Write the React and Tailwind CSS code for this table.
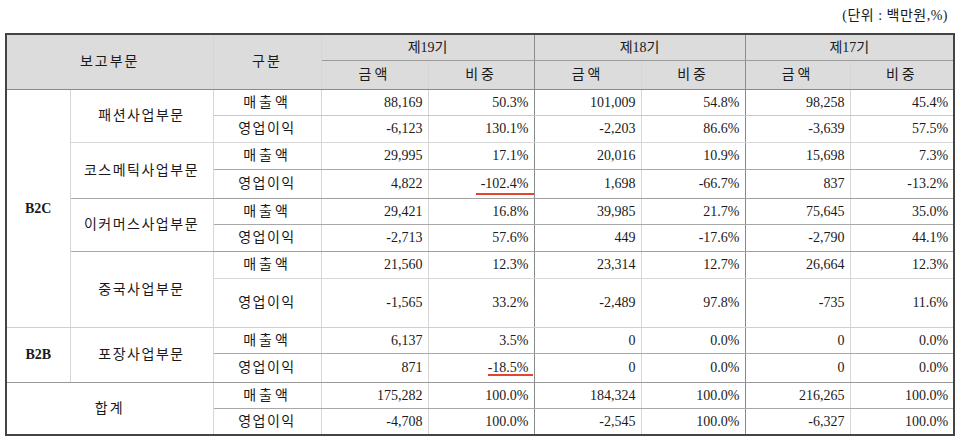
import React from 'react';

const rows = [
  { seg: 'B2C', segSpan: 8, unit: '패션사업부문', unitSpan: 2, kind: '매출액', h: 'h-[26px]', line: 'border-b-[#c8c8c8]', vals: ['88,169', '50.3%', '101,009', '54.8%', '98,258', '45.4%'] },
  { kind: '영업이익', h: 'h-[27px]', line: 'border-b-[#d8d8d8]', vals: ['-6,123', '130.1%', '-2,203', '86.6%', '-3,639', '57.5%'] },
  { unit: '코스메틱사업부문', unitSpan: 2, kind: '매출액', h: 'h-[27px]', line: 'border-b-[#a8a8a8]', vals: ['29,995', '17.1%', '20,016', '10.9%', '15,698', '7.3%'] },
  { kind: '영업이익', h: 'h-[29px]', line: 'border-b-[#a0a0a0]', mark: 'a', vals: ['4,822', '-102.4%', '1,698', '-66.7%', '837', '-13.2%'] },
  { unit: '이커머스사업부문', unitSpan: 2, kind: '매출액', h: 'h-[26px]', line: 'border-b-[#a8a8a8]', vals: ['29,421', '16.8%', '39,985', '21.7%', '75,645', '35.0%'] },
  { kind: '영업이익', h: 'h-[27px]', line: 'border-b-[#a0a0a0]', vals: ['-2,713', '57.6%', '449', '-17.6%', '-2,790', '44.1%'] },
  { unit: '중국사업부문', unitSpan: 2, kind: '매출액', h: 'h-[27px]', line: 'border-b-[#d8d8d8]', vals: ['21,560', '12.3%', '23,314', '12.7%', '26,664', '12.3%'] },
  { kind: '영업이익', h: 'h-[49px]', line: 'border-b-[#d0d0d0]', vals: ['-1,565', '33.2%', '-2,489', '97.8%', '-735', '11.6%'] },
  { seg: 'B2B', segSpan: 2, unit: '포장사업부문', unitSpan: 2, kind: '매출액', h: 'h-[26px]', line: 'border-b-[#a8a8a8]', vals: ['6,137', '3.5%', '0', '0.0%', '0', '0.0%'] },
  { kind: '영업이익', h: 'h-[29px]', line: 'border-b-[#999999]', mark: 'b', vals: ['871', '-18.5%', '0', '0.0%', '0', '0.0%'] },
  { total: true, kind: '매출액', h: 'h-[26px]', line: 'border-b-[#a8a8a8]', vals: ['175,282', '100.0%', '184,324', '100.0%', '216,265', '100.0%'] },
  { kind: '영업이익', h: 'h-[27px]', line: 'border-b-[#444444]', vals: ['-4,708', '100.0%', '-2,545', '100.0%', '-6,327', '100.0%'] },
];

const groupLine = ['border-r-[#d6d6d6]', 'border-r-[#8a8a8a]', 'border-r-[#d6d6d6]', 'border-r-[#8a8a8a]', 'border-r-[#d6d6d6]', 'border-r-[#444444]'];

export default function App() {
  return (
    <div className="w-[960px] h-[444px] bg-white text-[#1a1a1a] text-[14px]" style={{ fontFamily: '"Liberation Serif", "Noto Sans CJK KR", serif' }}>
      <div className="h-[33px] pt-[6px] pr-[12px] text-right leading-[20px] tracking-[0.5px]">(단위 : 백만원,%)</div>
      <table className="ml-[5px] table-fixed border-collapse w-[948px]">
        <colgroup>
          <col className="w-[64px]" />
          <col className="w-[143px]" />
          <col className="w-[108px]" />
          <col className="w-[107px]" />
          <col className="w-[106px]" />
          <col className="w-[107px]" />
          <col className="w-[104px]" />
          <col className="w-[105px]" />
          <col className="w-[104px]" />
        </colgroup>
        <thead>
          <tr className="h-[26px] bg-[#dcdcdc]">
            <th colSpan={2} rowSpan={2} className="font-normal tracking-[2px] border-2 border-[#444444] border-r border-r-[#d6d6d6] border-b border-b-[#8a8a8a]">보고부문</th>
            <th rowSpan={2} className="font-normal tracking-[2px] border-t-2 border-t-[#444444] border-r border-r-[#d6d6d6] border-b border-b-[#8a8a8a]">구분</th>
            <th colSpan={2} className="font-normal border-t-2 border-t-[#444444] border-r border-r-[#8a8a8a] border-b border-b-[#9a9a9a]">제19기</th>
            <th colSpan={2} className="font-normal border-t-2 border-t-[#444444] border-r border-r-[#8a8a8a] border-b border-b-[#9a9a9a]">제18기</th>
            <th colSpan={2} className="font-normal border-t-2 border-t-[#444444] border-r-2 border-r-[#444444] border-b border-b-[#9a9a9a]">제17기</th>
          </tr>
          <tr className="h-[29px] bg-[#dcdcdc]">
            {['금액', '비중', '금액', '비중', '금액', '비중'].map((t, i) => (
              <th key={i} className={`font-normal tracking-[3px] border-b border-b-[#8a8a8a] ${i === 5 ? 'border-r-2' : 'border-r'} ${groupLine[i]}`}>{t}</th>
            ))}
          </tr>
        </thead>
        <tbody>
          {rows.map((r, ri) => (
            <tr key={ri} className={r.h}>
              {r.seg && (
                <td rowSpan={r.segSpan} className={`text-center font-bold border-l-2 border-l-[#444444] border-r border-r-[#d6d6d6] border-b ${r.seg === 'B2C' ? 'border-b-[#d0d0d0]' : 'border-b-[#999999]'}`}>{r.seg}</td>
              )}
              {r.unit && (
                <td rowSpan={r.unitSpan} className={`text-center tracking-[1.5px] border-r border-r-[#d6d6d6] border-b ${ri + 2 === 10 ? 'border-b-[#999999]' : ri === 0 ? 'border-b-[#d8d8d8]' : ri === 6 ? 'border-b-[#d0d0d0]' : 'border-b-[#a8a8a8]'}`}>{r.unit}</td>
              )}
              {r.total && (
                <td colSpan={2} rowSpan={2} className="text-center tracking-[2px] border-l-2 border-l-[#444444] border-b-2 border-b-[#444444] border-r border-r-[#d6d6d6]">합계</td>
              )}
              <td className={`text-center border-r border-r-[#d6d6d6] ${ri === 11 ? 'border-b-2' : 'border-b'} ${r.line} ${r.kind === '매출액' ? 'tracking-[3px]' : 'tracking-[1.5px]'}`}>{r.kind}</td>
              {r.vals.map((v, vi) => (
                <td key={vi} className={`relative text-right pr-[5px] ${vi === 5 ? 'border-r-2' : 'border-r'} ${groupLine[vi]} ${ri === 11 ? 'border-b-2' : 'border-b'} ${r.line}`}>
                  {v}
                  {r.mark === 'a' && vi === 1 && (
                    <span className="absolute left-[47px] right-[0px] bottom-[3px] h-[2px] bg-[#e5432b]" />
                  )}
                  {r.mark === 'b' && vi === 1 && (
                    <span className="absolute left-[59px] right-[1px] bottom-[6px] h-[2px] bg-[#e5432b]" />
                  )}
                </td>
              ))}
            </tr>
          ))}
        </tbody>
      </table>
    </div>
  );
}
